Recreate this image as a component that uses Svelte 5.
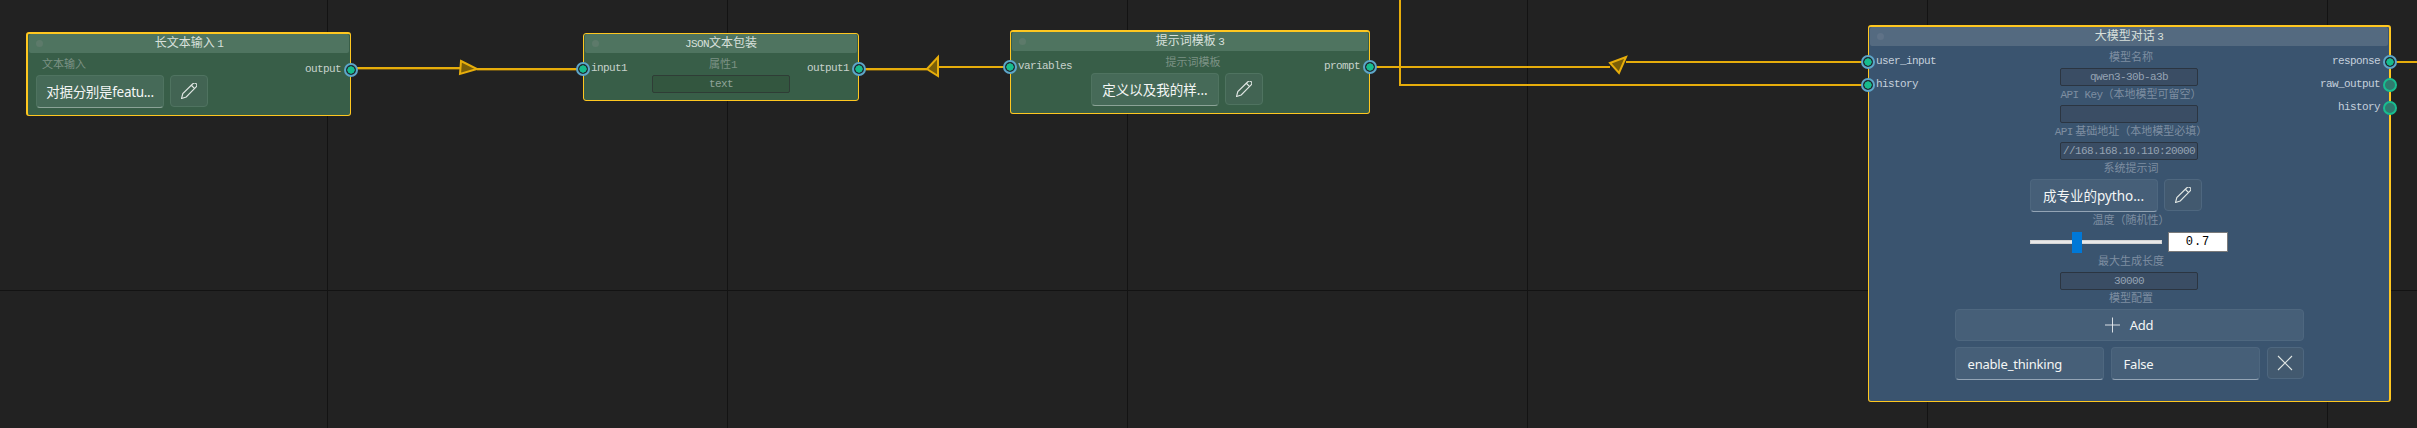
<script>
  const wires = [
    'M351 68H461', 'M477 69H583', 'M860 69H927', 'M938 67H1010',
    'M1371 67H1610', 'M1626 62H1867', 'M1400 0V85H1867', 'M2392 62H2417'
  ];
  const doubled = ['M351 69H461', 'M477 70H583', 'M860 70H927'];
  const arrows = [
    '461,61 477,69 460,74',
    '927,69 938,57 938,76',
    '1610,63 1626,57 1619,73'
  ];
</script>

{#snippet pencil()}
  <svg class="icon" viewBox="0.5 0.5 15 15" aria-hidden="true">
    <path d="M1 15l1.2-4.6L11.6 1.2a2 2 0 0 1 3.1 3L5.4 13.6z M10.2 2.6l3.1 3.1" />
  </svg>
{/snippet}

{#snippet port(name, state, side)}
  <div class="port {side}">
    <span class="handle {state}"></span>
    <span>{name}</span>
  </div>
{/snippet}

{#snippet texted(text)}
  <div class="texted">
    <button class="btn wide">{text}</button>
    <button class="btn square">{@render pencil()}</button>
  </div>
{/snippet}

<div class="canvas">
  <svg class="wires" width="2417" height="428" aria-hidden="true">
    {#each doubled as d}<path class="shade" d={d} />{/each}
    {#each wires as d}<path class="wire" d={d} />{/each}
    {#each arrows as p}<polygon class="arrow" points={p} />{/each}
  </svg>

  <section class="node green n1">
    <header><i></i><span>长文本输入 <b>1</b></span></header>
    <div class="body">
      <div class="mid">
        <div class="lab">文本输入</div>
        {@render texted('对据分别是featu...')}
      </div>
      <div class="ports">{@render port('output', 'on', 'right')}</div>
    </div>
  </section>

  <section class="node green n2">
    <header><i></i><span><b>JSON</b>文本包装</span></header>
    <div class="body">
      <div class="ports">{@render port('input1', 'on', 'left')}</div>
      <div class="mid">
        <div class="lab">属性<b>1</b></div>
        <div class="field">text</div>
      </div>
      <div class="ports">{@render port('output1', 'on', 'right')}</div>
    </div>
  </section>

  <section class="node green n3">
    <header><i></i><span>提示词模板 <b>3</b></span></header>
    <div class="body">
      <div class="ports">{@render port('variables', 'on', 'left')}</div>
      <div class="mid">
        <div class="lab">提示词模板</div>
        {@render texted('定义以及我的样...')}
      </div>
      <div class="ports">{@render port('prompt', 'on', 'right')}</div>
    </div>
  </section>

  <section class="node blue n4">
    <header><i></i><span>大模型对话 <b>3</b></span></header>
    <div class="body">
      <div class="ports">
        {@render port('user_input', 'on', 'left')}
        {@render port('history', 'on', 'left')}
      </div>
      <div class="mid">
        <div class="lab">模型名称</div>
        <div class="field">qwen3-30b-a3b</div>
        <div class="lab"><b>API Key</b>（本地模型可留空）</div>
        <div class="field"></div>
        <div class="lab"><b>API</b> 基础地址（本地模型必填）</div>
        <div class="field">//168.168.10.110:20000</div>
        <div class="lab">系统提示词</div>
        {@render texted('成专业的pytho...')}
        <div class="lab">温度（随机性）</div>
        <div class="slider">
          <div class="track"><span class="thumb"></span></div>
          <div class="value">0.7</div>
        </div>
        <div class="lab">最大生成长度</div>
        <div class="field">30000</div>
        <div class="lab">模型配置</div>
        <button class="btn add">
          <svg class="plus" viewBox="0 0 16 16" aria-hidden="true"><path d="M8 0v16M0 8h16" /></svg>
          Add
        </button>
        <div class="kv">
          <button class="btn">enable_thinking</button>
          <button class="btn">False</button>
          <button class="btn square">
            <svg class="icon" viewBox="0 0 16 16" aria-hidden="true"><path d="M1 1l14 14M15 1L1 15" /></svg>
          </button>
        </div>
      </div>
      <div class="ports">
        {@render port('response', 'on', 'right')}
        {@render port('raw_output', 'off', 'right')}
        {@render port('history', 'off', 'right')}
      </div>
    </div>
  </section>
</div>

<style>
  :global(body) { margin: 0; background: #222; }

  .canvas {
    position: relative;
    width: 2417px;
    height: 428px;
    overflow: hidden;
    background-color: #222222;
    background-image:
      linear-gradient(90deg, #131313 1px, transparent 1px),
      linear-gradient(#131313 1px, transparent 1px);
    background-size: 400px 100%, 100% 400px;
    background-position: 327px 0, 0 290px;
    font-family: "Liberation Mono", "Noto Sans CJK SC", monospace;
  }

  .wires { position: absolute; left: 0; top: 0; }
  .wire { fill: none; stroke: #e6ad0b; stroke-width: 2; shape-rendering: crispEdges; }
  .shade { fill: none; stroke: #6b5314; stroke-width: 2; shape-rendering: crispEdges; }
  .arrow { fill: #7a5e08; stroke: #e6ad0b; stroke-width: 2; }

  /* Nodes sit freely on the graph canvas */
  .node {
    position: absolute;
    box-sizing: border-box;
    display: flex;
    flex-direction: column;
    border: 1px solid #ffc720;
    border-radius: 3px;
  }
  .green { background: #385e48; --head: #4f7460; --lab: #7c9285; --btn: #466a58; --btn2: #426453; --line: #8ba397; --fld: #33563f; --edge: #2f3d36; --fldtext: #8fa398; --edge2: #4f7360; }
  .blue { background: #3a546f; --head: #546a80; --lab: #7e8ea1; --btn: #465f78; --btn2: #42596f; --line: #93a4b5; --fld: #3a4d64; --edge: #2b3541; --fldtext: #95a3b3; --edge2: #4e677f; }

  .n1 { left: 26px; top: 32px; width: 325px; height: 84px; border-width: 2px 1px 1px 2px; }
  .n2 { left: 583px; top: 33px; width: 276px; height: 68px; }
  .n3 { left: 1010px; top: 30px; width: 360px; height: 84px; border-top-width: 2px; }
  .n4 { left: 1868px; top: 25px; width: 523px; height: 377px; border-width: 2px 2px 1px 1px; }

  header {
    position: relative;
    flex: none;
    height: 19px;
    margin: 0 1px 0 1px;
    display: flex;
    align-items: center;
    justify-content: center;
    background: var(--head);
    border-radius: 2px;
    color: #d8e0dc;
    font: 12px/16px "Noto Sans CJK SC", sans-serif;
    padding-bottom: 3px;
    box-sizing: border-box;
  }
  header i {
    position: absolute;
    left: 7px;
    top: 6px;
    width: 7px;
    height: 7px;
    border-radius: 50%;
    background-color: #5d7a6a;
  }
  .blue header i { background-color: #5f7287; }
  header b, .lab b { font: 11px "Liberation Mono", monospace; letter-spacing: -0.6px; }

  .body { flex: 1; display: grid; min-height: 0; }
  .n1 .body { grid-template-columns: 1fr auto; }
  .n2 .body { grid-template-columns: 68px 138px 1fr; }
  .n3 .body { grid-template-columns: 80px 172px 1fr; }
  .n4 .body { grid-template-columns: 1fr 349px 1fr; }

  .ports { display: flex; flex-direction: column; }
  .n1 .ports { padding-top: 6px; }
  .n2 .ports { padding-top: 5px; }
  .n3 .ports { padding-top: 5px; }
  .n4 .ports { padding-top: 5px; }

  .port {
    position: relative;
    height: 23px;
    display: flex;
    align-items: center;
    font-size: 11px;
    letter-spacing: -0.6px;
    color: #c7d2cc;
    padding-bottom: 3px;
    box-sizing: border-box;
  }
  .n4 .port { color: #c5d0dc; }
  .port.left { padding-left: 7px; }
  .port.right { justify-content: flex-end; padding-right: 9px; }
  .handle {
    position: absolute;
    top: 4px;
    width: 14px;
    height: 14px;
    box-sizing: border-box;
    border-radius: 50%;
  }
  .port.left .handle { left: -8px; }
  .port.right .handle { right: -8px; }
  .handle.on { background: radial-gradient(circle, #17bc8d 0 3.4px, #1d2a30 3.9px); border: 2px solid #5da6c9; }
  .handle.off { background: #2f7a6e; border: 2px solid #18bd90; }

  .mid { display: flex; flex-direction: column; align-items: center; min-width: 0; padding-top: 3px; }
  .n1 .mid { align-items: flex-start; padding-left: 8px; }

  .lab {
    height: 14px;
    line-height: 14px;
    font-size: 11px;
    font-family: "Noto Sans CJK SC", sans-serif;
    color: var(--lab);
    margin-bottom: 5px;
    white-space: nowrap;
    padding-left: 4px;
  }
  .n1 .lab { padding-left: 6px; }
  .n3 .lab { padding-left: 32px; }

  .field {
    box-sizing: border-box;
    width: 138px;
    height: 18px;
    background: var(--fld);
    border: 1px solid var(--edge);
    border-radius: 2px;
    color: var(--fldtext);
    font-size: 11px;
    letter-spacing: -0.6px;
    line-height: 16px;
    text-align: center;
    white-space: nowrap;
    overflow: hidden;
  }

  .texted { display: flex; gap: 6px; align-items: flex-start; }
  .n4 .texted { margin-right: 27px; }
  .btn {
    box-sizing: border-box;
    height: 33px;
    padding: 0;
    background: var(--btn);
    border: 1px solid var(--edge2);
    border-bottom: 1px solid var(--line);
    border-radius: 4px;
    color: #f4f6f5;
    font: 13px/20px "Noto Sans", "Noto Sans CJK SC", sans-serif;
    letter-spacing: -0.2px;
    white-space: nowrap;
  }
  .btn.wide { width: 128px; font-size: 13.5px; letter-spacing: 0; }
  .n1 .btn.wide { letter-spacing: -0.3px; }
  .btn.square {
    width: 38px;
    height: 32px;
    background: var(--btn2);
    border-bottom-color: var(--edge2);
    display: flex;
    align-items: center;
    justify-content: center;
  }
  .icon { width: 16px; height: 16px; fill: none; stroke: #e0e6e3; stroke-width: 1.1; }

  .slider { display: flex; align-items: center; gap: 6px; width: 198px; height: 20px; margin: 1px 0; }
  .track {
    position: relative;
    width: 132px;
    height: 4px;
    background: #e8e8e8;
    box-shadow: inset 0 0 0 1px #d4d4d4;
  }
  .thumb {
    position: absolute;
    left: 42px;
    top: -8px;
    width: 10px;
    height: 21px;
    background: #0078d7;
  }
  .value {
    box-sizing: border-box;
    width: 60px;
    height: 20px;
    background: #fff;
    border: 1px solid #7a7a7a;
    color: #000;
    font: 12px/18px "Liberation Mono", monospace;
    text-align: center;
    letter-spacing: 1px;
  }

  .add {
    width: 349px;
    height: 32px;
    margin-bottom: 6px;
    border-bottom-color: var(--edge2);
    display: flex;
    align-items: center;
    justify-content: center;
    gap: 10px;
    padding-bottom: 1px;
  }
  .plus { width: 15px; height: 16px; fill: none; stroke: #e3e8ec; stroke-width: 1; }
  .kv { display: grid; grid-template-columns: 149px 149px 37px; gap: 7px; width: 349px; }
  .kv .btn:not(.square) { text-align: left; padding-left: 12px; }
  .kv .btn.square { width: 37px; }
</style>
